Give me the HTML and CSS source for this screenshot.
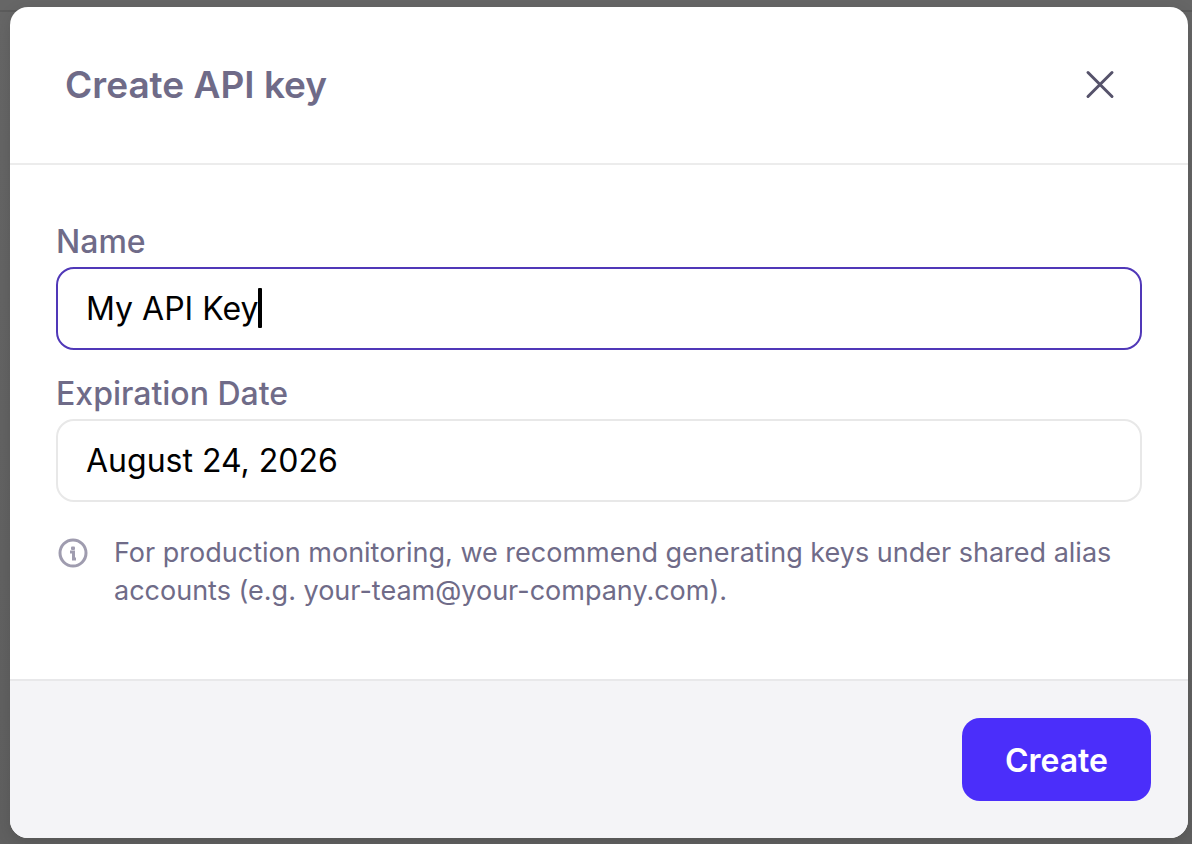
FILE: index.html
```html
<!DOCTYPE html>
<html lang="en">
<head>
<meta charset="utf-8">
<title>Create API key</title>
<link rel="stylesheet" href="styles.css">
</head>
<body>
<div class="backdrop">
  <form class="dialog" role="dialog" aria-labelledby="dialog-title">
    <header class="dialog-header">
      <h1 class="dialog-title" id="dialog-title">Create API key</h1>
      <button class="close-button" type="button" aria-label="Close">
        <svg class="close-icon" viewBox="0 0 30 30" aria-hidden="true"><path d="M3 2.5 L27 26.5 M27 2.5 L3 26.5"/></svg>
      </button>
    </header>
    <div class="dialog-body">
      <div class="field">
        <label class="field-label" for="key-name">Name</label>
        <div class="input-wrap">
          <input class="field-input field-input-active" id="key-name" type="text" value="My API Key">
          <span class="caret"></span>
        </div>
      </div>
      <div class="field">
        <label class="field-label" for="key-expiry">Expiration Date</label>
        <input class="field-input" id="key-expiry" type="text" value="August 24, 2026">
      </div>
      <div class="note">
        <svg class="note-icon" viewBox="0 0 30 30" aria-hidden="true">
          <circle cx="15" cy="15" r="13"/>
          <path d="M12 14 H15.5 V21 M14 21 H18"/>
          <rect x="13" y="8.5" width="4" height="3.5" rx="1"/>
        </svg>
        <p class="note-text">For production monitoring, we recommend generating keys under shared alias accounts (e.g. your-team@your-company.com).</p>
      </div>
    </div>
    <footer class="dialog-footer">
      <button class="create-button" type="submit">Create</button>
    </footer>
  </form>
</div>
</body>
</html>
```
FILE: styles.css
```css
* {
  box-sizing: border-box;
}

body {
  margin: 0;
  font-family: Inter, "Liberation Sans", sans-serif;
  font-optical-sizing: none;
  color: #6f6b88;
}

.backdrop {
  display: flex;
  min-height: 100vh;
  padding: 7px 4px 6px 10px;
  background: linear-gradient(#666 10px, #5b5b5b 10px, #5b5b5b 12px, #666 12px, #606060);
}

.dialog {
  display: flex;
  flex-direction: column;
  flex: 1;
  overflow: hidden;
  border-radius: 18px;
  background: #fff;
  box-shadow: 0 4px 16px rgba(0, 0, 0, 0.12);
}

.dialog-header {
  display: flex;
  align-items: center;
  justify-content: space-between;
  padding: 54px 73px 54px 55px;
  border-bottom: 2px solid #ececec;
}

.dialog-title {
  margin: 0;
  font-size: 37px;
  font-weight: 600;
  line-height: 48px;
}

.close-button {
  display: flex;
  padding: 0;
  border: 0;
  background: none;
}

.close-icon {
  width: 30px;
  height: 30px;
  fill: none;
  stroke: #55526a;
  stroke-width: 3;
  stroke-linecap: round;
}

.dialog-body {
  display: flex;
  flex: 1;
  flex-direction: column;
  gap: 24px;
  padding: 57px 46px 32px;
}

.field-label {
  display: block;
  margin-bottom: 5px;
  font-size: 32px;
  font-weight: 500;
  line-height: 40px;
}

.input-wrap {
  position: relative;
}

.field-input {
  display: block;
  width: 100%;
  height: 83px;
  padding: 0 28px;
  border: 2px solid #e8e8e8;
  border-radius: 18px;
  background: #fff;
  color: #000;
  font: inherit;
  font-size: 32px;
}

.field-input-active {
  border-color: #5038b8;
}

.caret {
  position: absolute;
  top: 21px;
  left: 202px;
  width: 4px;
  height: 40px;
  border-radius: 1px;
  background: #000;
}

.note {
  display: flex;
  gap: 26px;
  padding: 8px 0 0 2px;
}

.note-icon {
  flex: none;
  width: 30px;
  height: 30px;
  margin-top: 4px;
  fill: none;
  stroke: #9f9caf;
  stroke-width: 3;
}

.note-icon rect {
  fill: #9f9caf;
  stroke: none;
}

.note-text {
  margin: 0;
  font-size: 27px;
  line-height: 38px;
}

.dialog-footer {
  display: flex;
  justify-content: flex-end;
  padding: 37px;
  border-top: 2px solid #e8e8ea;
  background: #f4f4f7;
}

.create-button {
  height: 83px;
  padding: 2px 43px 0;
  border: 0;
  border-radius: 18px;
  background: #4b2efa;
  color: #fff;
  font: inherit;
  font-size: 32px;
  font-weight: 600;
}
```
